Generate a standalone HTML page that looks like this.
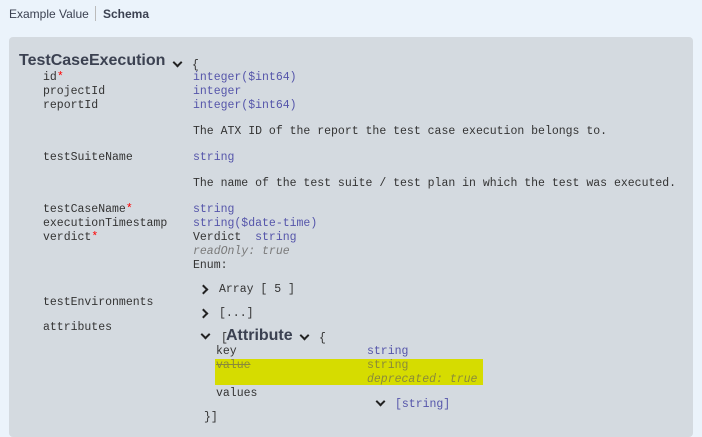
<!DOCTYPE html>
<html><head><style>
body{margin:0;width:702px;height:426px;background:#ebf3fb;overflow:hidden;position:relative;font-family:"Liberation Sans",sans-serif}
.t{position:absolute;font-family:"Liberation Mono",monospace;font-size:11.5px;line-height:14px;color:#333;white-space:pre}
.p{color:#55a}
.g{color:#7a7a7a;font-style:italic}
.r{color:#f00}
#box{position:absolute;left:9px;top:37px;width:684px;height:400px;background:#d4dae0;border-radius:4px}
.chev{position:absolute;width:5px;height:5px;border-right:2px solid #222;border-bottom:2px solid #222}
.dn{transform:rotate(45deg)}
.rt{transform:rotate(-45deg)}
</style></head><body>
<div style="position:absolute;left:9px;top:7px;font-size:12px;color:#3b4151">Example Value</div>
<div style="position:absolute;left:95px;top:6px;width:1px;height:15px;background:#bbb"></div>
<div style="position:absolute;left:103px;top:7px;font-size:12px;font-weight:bold;color:#3b4151">Schema</div>
<div id="box"></div>
<div style="position:absolute;left:19px;top:52px;font-size:16px;font-weight:bold;color:#3b4151">TestCaseExecution</div>
<div class="chev dn" style="left:174px;top:59px"></div>
<div class="t" style="left:192px;top:59px">{</div>
<div class="t" style="left:43px;top:71px">id<span class="r">*</span></div>
<div class="t p" style="left:193px;top:71px">integer($int64)</div>
<div class="t" style="left:43px;top:85px">projectId</div>
<div class="t p" style="left:193px;top:85px">integer</div>
<div class="t" style="left:43px;top:99px">reportId</div>
<div class="t p" style="left:193px;top:99px">integer($int64)</div>
<div class="t" style="left:193px;top:125px">The ATX ID of the report the test case execution belongs to.</div>
<div class="t" style="left:43px;top:151px">testSuiteName</div>
<div class="t p" style="left:193px;top:151px">string</div>
<div class="t" style="left:193px;top:177px">The name of the test suite / test plan in which the test was executed.</div>
<div class="t" style="left:43px;top:203px">testCaseName<span class="r">*</span></div>
<div class="t p" style="left:193px;top:203px">string</div>
<div class="t" style="left:43px;top:217px">executionTimestamp</div>
<div class="t p" style="left:193px;top:217px">string($date-time)</div>
<div class="t" style="left:43px;top:231px">verdict<span class="r">*</span></div>
<div class="t" style="left:193px;top:231px">Verdict  <span class="p">string</span></div>
<div class="t g" style="left:193px;top:245px">readOnly: true</div>
<div class="t" style="left:193px;top:259px">Enum:</div>
<div class="chev rt" style="left:200px;top:286px"></div>
<div class="t" style="left:219px;top:283px">Array [ 5 ]</div>
<div class="t" style="left:43px;top:296px">testEnvironments</div>
<div class="chev rt" style="left:200px;top:310px"></div>
<div class="t" style="left:219px;top:307px">[...]</div>
<div class="t" style="left:43px;top:321px">attributes</div>
<div class="chev dn" style="left:202px;top:331px"></div>
<div class="t" style="left:221px;top:332px">[</div>
<div style="position:absolute;left:226px;top:327px;font-size:16px;font-weight:bold;color:#3b4151">Attribute</div>
<div class="chev dn" style="left:301px;top:332px"></div>
<div class="t" style="left:319px;top:332px">{</div>
<div class="t" style="left:216px;top:345px">key</div>
<div class="t p" style="left:367px;top:345px">string</div>
<div style="position:absolute;left:215px;top:359px;width:268px;height:26px;background:#d6dc00"></div>
<div class="t" style="left:216px;top:359px;color:#8a8a3a;text-decoration:line-through">value</div>
<div class="t" style="left:367px;top:359px;color:#8a8a3a">string</div>
<div class="t" style="left:367px;top:373px;color:#8a8a3a;font-style:italic">deprecated: true</div>
<div class="t" style="left:216px;top:387px">values</div>
<div class="chev dn" style="left:377px;top:398px"></div>
<div class="t p" style="left:395px;top:398px">[string]</div>
<div class="t" style="left:204px;top:411px">}]</div>
</body></html>
